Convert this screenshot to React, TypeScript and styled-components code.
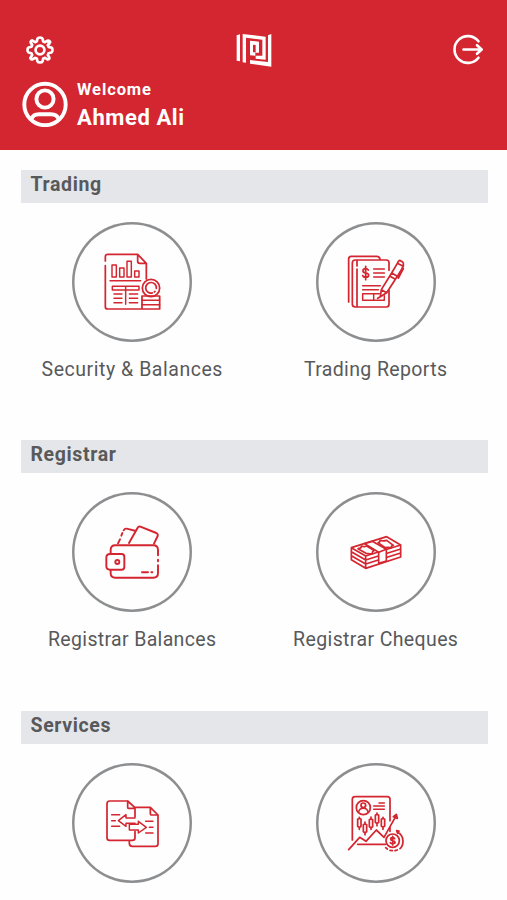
import React from "react";
import styled, { createGlobalStyle } from "styled-components";

const RED = "#d32630";

const GlobalStyle = createGlobalStyle`
  *, *::before, *::after { box-sizing: border-box; }
  body { margin: 0; background: #fefefe; overflow: hidden; }
`;

const Screen = styled.div`
  width: 507px;
  height: 900px;
  overflow: hidden;
  background: #fefefe;
  font-family: Roboto, "Liberation Sans", sans-serif;
  color: #58595b;
`;

const Header = styled.header`
  height: 149.5px;
  padding: 20px 7px 0 10px;
  background: ${RED};
  color: #fff;
`;

const TopBar = styled.div`
  display: grid;
  grid-template-columns: 1fr 60px 1fr;
  height: 60px;
  align-items: center;
`;

const IconButton = styled.button<{ $side: "start" | "end" }>`
  display: flex;
  justify-self: ${(p) => p.$side};
  padding: 0;
  border: 0;
  background: none;
  color: inherit;
`;

const Profile = styled.div`
  display: flex;
  gap: 9px;
  padding: 1px 0 0 12px;
`;

const Greeting = styled.div`
  display: flex;
  flex-direction: column;
`;

const Welcome = styled.span`
  font-size: 16.5px;
  line-height: 18px;
  font-weight: 700;
  letter-spacing: 0.9px;
`;

const UserName = styled.span`
  margin-top: 6px;
  font-size: 22px;
  line-height: 26px;
  font-weight: 700;
  letter-spacing: 0.6px;
`;

const Content = styled.main`
  display: flex;
  flex-direction: column;
  padding: 20px 19.5px 0 20.5px;
`;

const Section = styled.section`
  flex: none;
  height: 270.6px;
`;

const SectionTitle = styled.h2`
  height: 33px;
  margin: 0;
  padding: 3px 10px 0;
  background: #e5e6ea;
  font-size: 19.5px;
  line-height: 23px;
  font-weight: 700;
  letter-spacing: 0.63px;
`;

const Tiles = styled.div`
  display: grid;
  grid-template-columns: 223px 264px;
  margin-top: 19px;
`;

const Tile = styled.a`
  display: flex;
  flex-direction: column;
  align-items: center;
  white-space: nowrap;
`;

const Ring = styled.span`
  display: flex;
  align-items: center;
  justify-content: center;
  width: 120px;
  height: 120px;
  box-shadow: inset 0 0 0 2.5px #8d8e90;
  border-radius: 50%;
`;

const TileLabel = styled.span<{ $spacing: number }>`
  margin-top: 15px;
  font-size: 19.5px;
  line-height: 25px;
  letter-spacing: ${(p) => p.$spacing}px;
  margin-right: -${(p) => p.$spacing}px;
`;

const Glyph = styled.svg<{ $stroke?: number }>`
  display: block;
  flex: none;
  width: 84px;
  height: 84px;
  fill: none;
  stroke: ${RED};
  stroke-width: ${(p) => p.$stroke ?? 5.2};
  stroke-linecap: round;
  stroke-linejoin: round;
`;

const GearIcon = () => (
  <svg width="60" height="60" viewBox="0 0 60 60" fill="none" stroke="#fff" strokeWidth="2.7" strokeLinejoin="round">
    <circle cx="30" cy="30" r="4.4" />
    <path d="M27.5 18.6Q28 17.5 30 17.5T32.5 18.6L33.2 21.4Q34.4 21.9 35 22.2L37.5 20.7Q38.7 20.3 39.8 21.4T39.3 22.5T39.3 23.7L37.8 25.1Q38.4 26.2 38.6 26.9L41.4 27.6Q42.5 28.1 42.5 30T41.4 32.5L38.6 33.2Q38.3 34.2 37.8 35L39.3 37.5Q39.8 38.6 38.8 39.2T37.5 39.3L35 37.8Q34.1 38.3 33.2 38.6L32.5 41.4Q32 42.5 30 42.5T27.5 41.4L26.8 38.6Q25.8 38.3 25 37.8L22.5 39.3Q21.4 39.8 20.7 38.8T20.7 37.5L22.2 35Q21.7 34.1 21.4 33.2L18.6 32.5Q17.5 32 17.5 30T18.6 27.5L21.4 26.8Q21.7 25.8 22.2 25L20.7 22.5Q20.3 21.4 21.2 20.8T22.5 20.7L25 22.2Q25.9 21.7 26.8 21.4Z" />
  </svg>
);

const Logo = () => (
  <svg width="60" height="60" viewBox="0 0 180 180" fill="#fff">
    <path d="M35 46L45 43V124L35 122ZM53 42L122 50V119L92 116V107H112V59L63 53V128L53 127ZM75 62L102 65V98H92V75L84 74V97H91V107L75 106ZM129 46L139 42V140L75 131V120L129 126Z" />
  </svg>
);

const LogoutIcon = () => (
  <svg width="60" height="60" viewBox="0 0 60 60" fill="none" stroke="#fff" strokeWidth="2.6" strokeLinecap="round" strokeLinejoin="round">
    <path d="M38.5 21.3A13.4 13.4 0 1 0 38.5 37.7M23.5 29.5H41.5M37 25.2L41.7 29.5L37 33.8" />
  </svg>
);

const AvatarIcon = () => (
  <svg width="46" height="46" viewBox="0 0 46 46" fill="none" stroke="#fff" strokeWidth="3.9">
    <circle cx="23" cy="23.5" r="20.7" />
    <circle cx="23" cy="18" r="8.6" />
    <path d="M9.5 38Q11 33.3 17 33.3H29Q35 33.3 36.5 38" />
  </svg>
);

const BalancesIcon = () => (
  <Glyph viewBox="0 0 252 252">
    <path d="M46 63V50Q46 43 53 43H143L169 70V117M46 77V200Q46 207 53 207H209V168H156V207M143 43V64Q143 70 149 70H169" />
    <path d="M66 75H79V111H66ZM89 84H102V111H89ZM111 64H124V111H111ZM134 93H147V111H134ZM60 122H152M67 139H147V150H67ZM107 141V193M72 162H96M72 175H96M72 188H96M118 162H143M118 175H143M118 188H143M156 181H209M156 194H209" strokeWidth="4.4" />
    <circle cx="183" cy="144" r="26" />
    <path d="M187 159A16 16 0 1 1 199 145M195 154L193 156" />
  </Glyph>
);

const ReportsIcon = () => (
  <Glyph viewBox="0 0 252 252">
    <path d="M44 186V57Q44 49 52 49H128Q136 49 138 57M55 190V69Q55 60 64 60H157Q165 60 165 68V91M165 151V193Q165 201 157 201H64Q55 201 55 192M69 63V78M69 87V200" />
    <path d="M119 87H151M119 99H151M119 111H151M86 137H139M86 149H133M86 161H119V181H86ZM119 161H136M119 181H151V167" strokeWidth="4.4" />
    <path d="M103 90Q100 86 95 86Q87 86 87 92T95 99Q104 100 104 106T95 112Q88 112 86 107M95 79V119" />
    <path d="M142 149L173 99L190 109L158 158L139 170ZM173 99L190 70L208 79L190 109M190 70L194 63Q197 60 201 63L206 66Q209 69 208 72V79M142 149L158 158M167 108L184 118M205 82L208 86L193 114M139 170L131 175" />
  </Glyph>
);

const WalletIcon = () => (
  <Glyph viewBox="0 0 252 252" $stroke={5.8}>
    <path d="M204 136V120Q204 106 190 106H76Q62 106 62 120V132M62 180V190Q62 203 76 203H190Q204 203 204 190V166M204 149V154" />
    <path d="M60 132H95Q103 132 103 140V171Q103 179 95 179H60Q49 179 49 168V143Q49 132 60 132ZM117 99L143 53Q146 48 151 50L199 69Q205 72 203 78L192 101M84 100L90 88M94 77L97 69M101 61Q104 55 110 56L138 63M156 187H174M184 187H187" />
    <circle cx="82" cy="156" r="6" />
  </Glyph>
);

const ChequesIcon = () => (
  <Glyph viewBox="0 0 252 252" $stroke={5}>
    <path d="M52 113L158 80L200 105L95 138ZM52 113V149L95 175L200 141V105M95 138V175M52 125L95 150L200 117M52 137L95 162L200 129" />
    <path d="M92 101L134 127V160L157 153V118L115 94Z" fill="#fefefe" />
    <path d="M134 127L157 118M72 116Q81 116 83 108Q90 112 98 108L120 122Q113 125 116 131Q104 132 96 130ZM132 98Q139 97 138 91Q147 94 158 91L178 106Q171 107 171 114Q164 111 154 113Z" />
  </Glyph>
);

const TransferIcon = () => (
  <Glyph viewBox="0 0 252 252">
    <path d="M113 60H59Q51 60 51 68V170Q51 178 59 178H127Q135 178 135 170V151M135 108V80L113 60V79Q113 82 116 82H135M137 79H181L204 102V188Q204 196 196 196H127Q118 196 118 187V179M181 79V98Q181 102 185 102H204" />
    <path d="M135 111H108V101L85 119L108 136V127H135M118 130H145V121L169 139L145 156V147H118ZM65 101H89M65 119H76M65 136H89M167 121H189M178 139H189M167 156H189" strokeWidth="4.4" />
  </Glyph>
);

const InvestorIcon = () => (
  <Glyph viewBox="0 0 252 252">
    <path d="M55 177V55Q55 47 63 47H160Q168 47 168 55V119M71 190H154M44 206L77 169L96 181L127 147L150 169L187 103M178 107L187 100L190 112ZM168 137V151" />
    <circle cx="88" cy="80" r="21" />
    <circle cx="88" cy="73" r="7" />
    <path d="M74 93Q76 82 88 82T102 93M135 66H151M119 75H151M119 85H151" strokeWidth="4.4" />
    <path d="M76 109V113M76 139V145M71 115L76 112L81 115V136L76 140L71 136ZM93 123V129M93 155V161M88 131L93 128L98 131V152L93 156L88 152ZM111 108V114M111 140V145M106 116L111 113L116 116V137L111 141L106 137ZM129 96V101M129 127V134M124 103L129 100L134 103V124L129 128L124 124ZM147 109V113M147 139V145M142 115L147 112L152 115V135L147 139L142 135Z" />
    <circle cx="176" cy="179" r="20" />
    <path d="M182 173Q180 170 176 170Q170 170 170 174T176 179T183 184T176 188Q171 188 169 185M176 166V192" />
    <path d="M190 152Q207 162 207 180Q207 195 198 203M188 149L195 150L191 157ZM190 207L183 209M175 209L168 208M160 204L155 200" />
  </Glyph>
);

const sections = [
  {
    title: "Trading",
    tiles: [
      { label: "Security & Balances", spacing: 0.54, Icon: BalancesIcon },
      { label: "Trading Reports", spacing: 0.37, Icon: ReportsIcon },
    ],
  },
  {
    title: "Registrar",
    tiles: [
      { label: "Registrar Balances", spacing: 0.34, Icon: WalletIcon },
      { label: "Registrar Cheques", spacing: 0.38, Icon: ChequesIcon },
    ],
  },
  {
    title: "Services",
    tiles: [
      { label: "", spacing: 0, Icon: TransferIcon },
      { label: "", spacing: 0, Icon: InvestorIcon },
    ],
  },
];

export default function App() {
  return (
    <Screen>
      <GlobalStyle />
      <Header>
        <TopBar>
          <IconButton $side="start" aria-label="Settings"><GearIcon /></IconButton>
          <Logo />
          <IconButton $side="end" aria-label="Log out"><LogoutIcon /></IconButton>
        </TopBar>
        <Profile>
          <AvatarIcon />
          <Greeting>
            <Welcome>Welcome</Welcome>
            <UserName>Ahmed Ali</UserName>
          </Greeting>
        </Profile>
      </Header>
      <Content>
        {sections.map(({ title, tiles }) => (
          <Section key={title}>
            <SectionTitle>{title}</SectionTitle>
            <Tiles>
              {tiles.map(({ label, spacing, Icon }, i) => (
                <Tile key={i}>
                  <Ring><Icon /></Ring>
                  {label && <TileLabel $spacing={spacing}>{label}</TileLabel>}
                </Tile>
              ))}
            </Tiles>
          </Section>
        ))}
      </Content>
    </Screen>
  );
}
